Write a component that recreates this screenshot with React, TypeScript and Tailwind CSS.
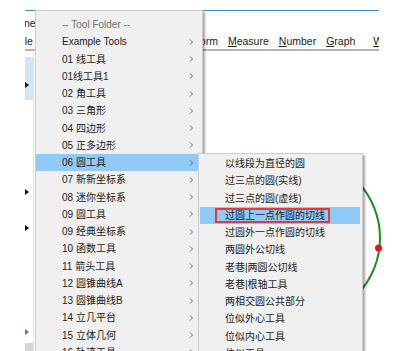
const mainItems = [
  "Example Tools",
  "01 线工具",
  "01线工具1",
  "02 角工具",
  "03 三角形",
  "04 四边形",
  "05 正多边形",
  "06 圆工具",
  "07 新新坐标系",
  "08 迷你坐标系",
  "09 圆工具",
  "09 经典坐标系",
  "10 函数工具",
  "11 箭头工具",
  "12 圆锥曲线A",
  "13 圆锥曲线B",
  "14 立几平台",
  "15 立体几何",
  "16 轨迹工具",
];

const subItems = [
  "以线段为直径的圆",
  "过三点的圆(实线)",
  "过三点的圆(虚线)",
  "过圆上一点作圆的切线",
  "过圆外一点作圆的切线",
  "两圆外公切线",
  "老巷|两圆公切线",
  "老巷|根轴工具",
  "两相交圆公共部分",
  "位似外心工具",
  "位似内心工具",
  "位似工具",
];

const menuBar = ["File", "Edit", "Display", "Construct", "Transform", "Measure", "Number", "Graph", "Window"];

function Chevron() {
  return (
    <svg width="5" height="8" viewBox="0 0 5 8" className="shrink-0">
      <path d="M1 1.5l2.5 2.5L1 6.5" fill="none" stroke="#6b6b6b" strokeWidth="1" />
    </svg>
  );
}

function Triangle({ color = "#111" }: { color?: string }) {
  return (
    <svg width="4" height="6" viewBox="0 0 4 6">
      <path d="M0 0l4 3-4 3z" fill={color} />
    </svg>
  );
}

export default function App() {
  return (
    <div className="relative w-[394px] h-[351px] overflow-hidden bg-white font-['Liberation_Sans','Noto_Sans_CJK_SC',sans-serif] text-[#1b1b1b]">
      {/* background sketchpad window */}
      <div className="absolute left-[25px] top-[10px] w-[354px] h-[341px] overflow-hidden border-t border-[#3d8fe0] flex flex-col">
        <div className="h-[24px] flex items-center pt-[2px] text-[10.5px] -ml-[1px]">ne</div>
        <div className="h-[16px] flex items-center gap-[10px] border-b-2 border-[#b4b4b4] text-[10.5px] -ml-[9px] whitespace-nowrap">
          {menuBar.map((m) => (
            <span key={m} className={m === "Window" ? "ml-[8px]" : ""}>
              <span className="underline underline-offset-[1px]">{m[0]}</span>
              {m.slice(1)}
            </span>
          ))}
        </div>
        <div className="flex flex-1">
          <div className="w-[9px] flex flex-col border-r border-[#e2e2e2]">
            <div className="mt-[6px] h-[43px] bg-[#cfe5f8] flex items-end pb-[12px]">
              <Triangle />
            </div>
            <div className="h-[67px]" />
            <div className="h-[36px] flex items-end pb-[8px]">
              <Triangle />
            </div>
            <div className="h-[36px] flex items-end pb-[8px]">
              <Triangle />
            </div>
            <div className="h-[104px] flex items-end pb-[8px]">
              <Triangle color="#3b7fd0" />
            </div>
            <div className="flex-1 bg-[#d6d6d6]" />
          </div>
          <div className="flex-1" />
        </div>
      </div>

      {/* circle on the canvas */}
      <svg className="absolute left-0 top-0" width="394" height="351" viewBox="0 0 394 351">
        <circle cx="298" cy="238" r="82" fill="none" stroke="#1e8c1e" strokeWidth="2" />
        <circle cx="378.5" cy="248" r="3.5" fill="#e8141b" />
      </svg>

      {/* main tool folder menu */}
      <div className="absolute left-[35px] top-[10px] w-[168px] h-[360px] bg-[#f0f0f0] border border-[#cccccc] shadow-[2px_2px_2px_rgba(0,0,0,0.35)] pt-[5px] text-[10px]">
        <div className="h-[17.25px] flex items-center pl-[26px] text-[#6f6f6f]">-- Tool Folder --</div>
        {mainItems.map((item) => (
          <div
            key={item}
            className={`h-[17.25px] flex items-center justify-between pl-[26px] pr-[8px] whitespace-nowrap ${
              item === "06 圆工具" ? "bg-[#91c9f7]" : ""
            }`}
          >
            <span>{item}</span>
            <Chevron />
          </div>
        ))}
      </div>

      {/* submenu */}
      <div className="absolute left-[198px] top-[153px] w-[165px] h-[220px] bg-[#f0f0f0] border border-[#cccccc] shadow-[2px_2px_2px_rgba(0,0,0,0.35)] pt-[1px] text-[10px]">
        {subItems.map((item, i) => (
          <div
            key={item}
            className={`h-[17.25px] flex items-center pl-[25px] ml-[1px] mr-[2px] whitespace-nowrap ${
              i === 3 ? "bg-[#91c9f7]" : ""
            }`}
          >
            {i === 3 ? (
              <span className="-ml-[10px] h-[15px] flex items-center pl-[8px] pr-[3px] border-2 border-[#e0393e]">
                {item}
              </span>
            ) : (
              <span>{item}</span>
            )}
          </div>
        ))}
      </div>
    </div>
  );
}
